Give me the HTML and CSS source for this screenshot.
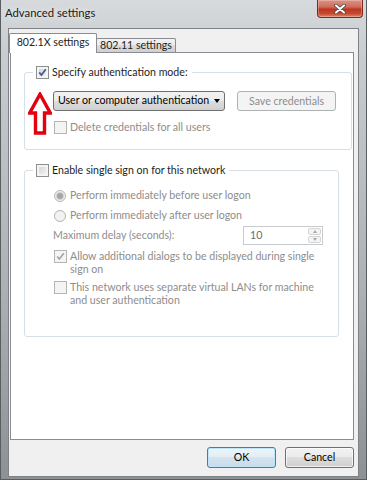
FILE: index.html
```html
<!DOCTYPE html>
<html lang="en">
<head>
    <meta charset="UTF-8">
    <meta name="viewport" content="width=device-width, initial-scale=1.0">
    <title>Advanced settings</title>
    <link rel="stylesheet" href="styles.css">
</head>
<body>

    <div class="window">
        <div class="titlebar">
            <span class="title">Advanced settings</span>
            <div class="close">
                <svg width="12" height="10" viewBox="0 0 12 10">
                    <path d="M2 1.5 L10 8.5 M10 1.5 L2 8.5" stroke="#4a4a4a" stroke-width="3.6" stroke-linecap="round"/>
                    <path d="M2 1.5 L10 8.5 M10 1.5 L2 8.5" stroke="#ffffff" stroke-width="2" stroke-linecap="round"/>
                </svg>
            </div>
        </div>

        <div class="client">
            <div class="tabs">
                <div class="tab active">802.1X settings</div>
                <div class="tab">802.11 settings</div>
            </div>

            <div class="panel">
                <!-- red annotation arrow -->
                <svg class="arrow" width="24" height="43" viewBox="0 0 24 43">
                    <path d="M12 2.2 L22.3 21 L16.5 21 L16.5 41 L7.5 41 L7.5 21 L1.7 21 Z" fill="#ffffff" stroke="#e3000f" stroke-width="3.4" stroke-linejoin="miter"/>
                </svg>

                <fieldset class="group group-auth">
                    <legend>
                        <span class="option">
                            <span class="check checked">
                                <svg width="11" height="11" viewBox="0 0 11 11"><path d="M2.2 5.4 L4.4 8 L8.8 2.2" fill="none" stroke="#4a5d8e" stroke-width="1.8"/></svg>
                            </span>
                            Specify authentication mode:
                        </span>
                    </legend>
                    <div class="group-body">
                        <div class="mode-row">
                            <div class="combo">User or computer authentication<span class="combo-arrow"></span></div>
                            <div class="btn disabled">Save credentials</div>
                        </div>
                        <div class="option disabled delete-row">
                            <span class="check"></span>
                            Delete credentials for all users
                        </div>
                    </div>
                </fieldset>

                <fieldset class="group group-sso">
                    <legend>
                        <span class="option">
                            <span class="check"></span>
                            Enable single sign on for this network
                        </span>
                    </legend>
                    <div class="group-body">
                        <div class="option disabled radio-row first">
                            <span class="radio selected"></span>
                            Perform immediately before user logon
                        </div>
                        <div class="option disabled radio-row">
                            <span class="radio"></span>
                            Perform immediately after user logon
                        </div>
                        <div class="delay-row disabled">
                            <span>Maximum delay (seconds):</span>
                            <div class="spin">
                                <span class="spin-value">10</span>
                                <span class="spin-buttons">
                                    <span class="spin-up"></span>
                                    <span class="spin-down"></span>
                                </span>
                            </div>
                        </div>
                        <div class="option disabled multi">
                            <span class="check">
                                <svg width="11" height="11" viewBox="0 0 11 11"><path d="M2.2 5.4 L4.4 8 L8.8 2.2" fill="none" stroke="#a3a3a3" stroke-width="1.6"/></svg>
                            </span>
                            <span class="option-text">Allow additional dialogs to be displayed during single sign on</span>
                        </div>
                        <div class="option disabled multi">
                            <span class="check"></span>
                            <span class="option-text">This network uses separate virtual LANs for machine and user authentication</span>
                        </div>
                    </div>
                </fieldset>
            </div>

            <div class="actions">
                <div class="btn default">OK</div>
                <div class="btn">Cancel</div>
            </div>
        </div>
    </div>

</body>
</html>
```

FILE: styles.css
```css
* {
    margin: 0;
    padding: 0;
    box-sizing: border-box;
}

body {
    width: 367px;
    height: 480px;
    overflow: hidden;
    font-family: Lato, "Noto Sans", sans-serif;
    font-size: 10.6px;
    line-height: 13px;
    color: #1e1e1e;
}

.window {
    height: 480px;
    display: flex;
    flex-direction: column;
    background: linear-gradient(#d7dadd 0%, #c9cccf 12%, #aeb1b4 60%, #8e9194 100%);
    border: 1px solid #5a5e62;
    border-top: none;
}

.titlebar {
    height: 28px;
    display: flex;
    justify-content: space-between;
    align-items: flex-start;
    padding-left: 4px;
}

.title {
    margin-top: 6px;
    font-size: 11.3px;
    color: #1b1b1b;
    text-shadow: 0 0 6px #f4f4f4;
}

.close {
    width: 46px;
    height: 18px;
    margin-right: 3px;
    display: flex;
    justify-content: center;
    align-items: center;
    border: 1px solid #7c2b1f;
    border-top: none;
    border-radius: 0 0 4px 4px;
    background: linear-gradient(#dc9383 0%, #cf6d5b 40%, #bf3522 55%, #c8492f 80%, #dd8a6a 100%);
    box-shadow: inset 0 0 0 1px rgba(255, 255, 255, 0.25);
}

.client {
    flex: 1;
    margin: 0 7px 2px 7px;
    background: #f0f0f0;
    border: 1px solid #7d8288;
    display: flex;
    flex-direction: column;
    padding: 4px 4px 7px 0;
}

.tabs {
    display: flex;
    align-items: flex-end;
    height: 20px;
    margin-bottom: -1px;
    position: relative;
    z-index: 1;
}

.tab {
    height: 14px;
    width: 80px;
    margin-left: -1px;
    margin-bottom: 1px;
    border: 1px solid #898c95;
    border-bottom: none;
    border-radius: 2px 2px 0 0;
    background: linear-gradient(#f3f3f3, #ebebeb 50%, #dddddd 50%, #cfcfcf);
    text-align: center;
    line-height: 13px;
    white-space: nowrap;
}

.tab.active {
    height: 20px;
    width: 88px;
    margin-left: 0;
    margin-bottom: 0;
    background: #ffffff;
    position: relative;
    z-index: 1;
    line-height: 17px;
}

.panel {
    height: 388px;
    margin-left: 1px;
    background: #ffffff;
    border: 1px solid #898c95;
    padding: 13px 14px 0 13px;
    position: relative;
}

.arrow {
    position: absolute;
    left: 17px;
    top: 39px;
}

.group {
    border: 1px solid #d5dfe5;
    border-radius: 3px;
    padding: 0 15px 0 8px;
}

.group legend {
    padding: 0 4px 0 3px;
}

.group-auth {
    padding-bottom: 15px;
}

.group-sso {
    margin-top: 14px;
    padding-bottom: 29px;
}

.group-body {
    padding-left: 20px;
}

.option {
    display: flex;
    align-items: center;
    gap: 3px;
    height: 13px;
    white-space: nowrap;
}

.disabled {
    color: #8d8d8d;
}

.check {
    width: 13px;
    height: 13px;
    flex: none;
    border: 1px solid #8e8f8f;
    background: linear-gradient(135deg, #cdd1d7, #f7f7f7);
    box-shadow: inset 0 0 0 2px #f4f4f4;
    display: flex;
    justify-content: center;
    align-items: center;
}

.disabled .check {
    border-color: #b4b4b4;
    background: #f4f4f4;
    box-shadow: none;
}

.radio {
    width: 12px;
    height: 12px;
    flex: none;
    margin-right: 1px;
    border: 1px solid #b4b4b4;
    border-radius: 50%;
    background: #f2f2f2;
    display: flex;
    justify-content: center;
    align-items: center;
}

.radio.selected::after {
    content: "";
    width: 6px;
    height: 6px;
    border-radius: 50%;
    background: #a6a6a6;
    box-shadow: 0 0 0 1px #d2d2d2;
}

.mode-row {
    margin-top: 11px;
    display: flex;
    align-items: center;
    gap: 12px;
}

.combo {
    width: 172px;
    height: 20px;
    padding-left: 4px;
    display: flex;
    align-items: center;
    justify-content: space-between;
    border: 1px solid #707070;
    border-radius: 3px;
    background: linear-gradient(#f2f2f2, #ebebeb 50%, #dddddd 50%, #cfcfcf);
    color: #000000;
    white-space: nowrap;
}

.combo-arrow {
    width: 0;
    height: 0;
    margin-right: 4px;
    border-left: 3.5px solid transparent;
    border-right: 3.5px solid transparent;
    border-top: 4px solid #000000;
}

.btn {
    height: 21px;
    width: 69px;
    display: flex;
    justify-content: center;
    align-items: center;
    border: 1px solid #707070;
    border-radius: 3px;
    background: linear-gradient(#f2f2f2, #ebebeb 50%, #dddddd 50%, #cfcfcf);
    box-shadow: inset 0 0 0 1px rgba(255, 255, 255, 0.7);
    color: #000000;
}

.btn.disabled {
    width: 99px;
    height: 20px;
    margin-top: 1px;
    border-color: #adb2b5;
    background: #f4f4f4;
    box-shadow: none;
    color: #8d8d8d;
}

.btn.default {
    border-color: #3c7fb1;
    background: linear-gradient(#eef5fa, #e2edf5 50%, #d3e3ef 50%, #c9dcea);
    box-shadow: inset 0 0 0 1px #bfe4f8;
}

.delete-row {
    margin-top: 10px;
    padding-left: 1px;
}

.radio-row {
    margin-top: 7px;
    padding-left: 1px;
}

.radio-row.first {
    margin-top: 12px;
}

.delay-row {
    margin-top: 4px;
    height: 19px;
    display: flex;
    justify-content: space-between;
    align-items: center;
}

.spin {
    width: 80px;
    height: 19px;
    display: flex;
    justify-content: space-between;
    border: 1px solid #c7cbcf;
    background: #ffffff;
}

.spin-value {
    padding-left: 6px;
    line-height: 17px;
    color: #6d6d6d;
}

.spin-buttons {
    width: 13px;
    margin: 1px;
    display: flex;
    flex-direction: column;
    gap: 1px;
}

.spin-up,
.spin-down {
    flex: 1;
    border: 1px solid #d6d6d6;
    border-radius: 2px;
    background: #f4f4f4;
    display: flex;
    justify-content: center;
    align-items: center;
}

.spin-up::after {
    content: "";
    border-left: 2.5px solid transparent;
    border-right: 2.5px solid transparent;
    border-bottom: 3px solid #a7a7a7;
}

.spin-down::after {
    content: "";
    border-left: 2.5px solid transparent;
    border-right: 2.5px solid transparent;
    border-top: 3px solid #a7a7a7;
}

.option.multi {
    height: auto;
    margin-top: 5px;
    padding-left: 1px;
    align-items: flex-start;
    white-space: normal;
}

.option-text {
    flex: 1;
}

.actions {
    margin-top: 7px;
    display: flex;
    justify-content: flex-end;
    gap: 9px;
}
```
